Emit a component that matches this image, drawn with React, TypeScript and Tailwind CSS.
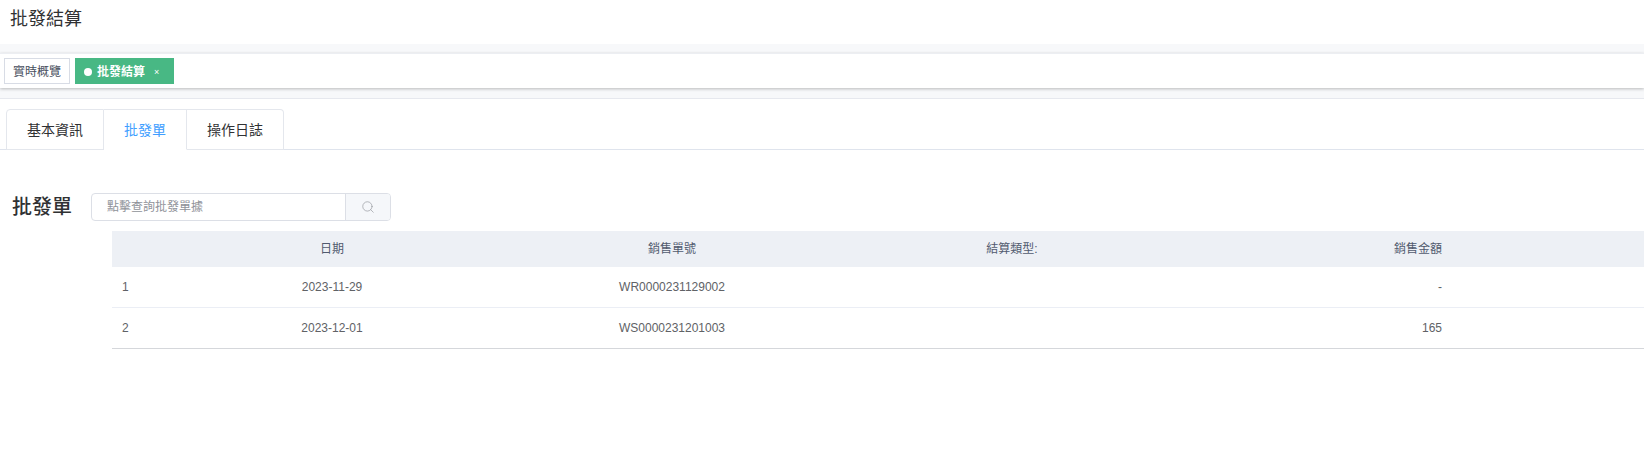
import { Search } from 'lucide-react';

const rows = [
  { id: 1, date: '2023-11-29', no: 'WR0000231129002', type: '', amount: '-' },
  { id: 2, date: '2023-12-01', no: 'WS0000231201003', type: '', amount: '165' },
];

function App() {
  return (
    <div className="h-[453px] overflow-hidden bg-white font-['Liberation_Sans','Noto_Sans_CJK_TC',sans-serif] text-[#515a6e]">
      {/* Page title */}
      <div className="h-11 pl-[10px] pt-[7px] text-[18px] leading-6 text-[#303133]">批發結算</div>

      {/* Tag bar */}
      <div className="h-[55px] border-b border-[#e6e8ee] bg-[#f7f8fa] pt-[9px]">
        <div className="flex h-[35px] items-center gap-[5px] border-t border-[#eceef2] bg-white pl-1 shadow-[0_1px_3px_rgba(0,0,0,0.25)]">
          <div className="flex h-[26px] w-[66px] items-center justify-center border border-[#d8dce5] pt-px text-xs text-[#495060]">實時概覽</div>
          <div className="flex h-[26px] w-[99px] items-center bg-[#48b884] pl-[9px] pt-px text-xs font-bold text-white">
            <span className="mr-[5px] h-2 w-2 rounded-full bg-white" />
            批發結算
            <span className="ml-[9px] text-[9px] font-normal">×</span>
          </div>
        </div>
      </div>

      {/* Tabs */}
      <div className="mt-[10px] flex h-[41px] border-b border-[#dfe4ed] pl-[6px] text-sm text-[#303133]">
        <div className="flex h-[41px] w-[98px] items-center justify-center rounded-tl border border-[#e4e7ed]">基本資訊</div>
        <div className="flex h-[41px] w-[83px] items-center justify-center border-y border-r border-[#e4e7ed] border-b-white text-[#409eff]">批發單</div>
        <div className="flex h-[41px] w-[97px] items-center justify-center rounded-tr border-y border-r border-[#e4e7ed]">操作日誌</div>
      </div>

      {/* Section header + search */}
      <div className="mt-[43px] flex h-[28px] items-center pl-[12px]">
        <h2 className="w-[79px] text-[20px] font-medium leading-7 text-[#303133]">批發單</h2>
        <div className="flex h-[28px] w-[300px] overflow-hidden rounded border border-[#dcdfe6]">
          <div className="flex flex-1 items-center pl-[15px] text-xs text-[#8f9299]">點擊查詢批發單據</div>
          <div className="flex w-[45px] items-center justify-center border-l border-[#dcdfe6] bg-[#f5f7fa] text-[#909399]">
            <Search size={14} strokeWidth={1.1} className="-mt-px" />
          </div>
        </div>
      </div>

      {/* Table */}
      <div className="ml-[112px] mt-[10px]">
        <table className="w-full table-fixed border-collapse text-xs text-[#606266]">
          <colgroup>
            <col className="w-[50px]" />
            <col className="w-[340px]" />
            <col className="w-[340px]" />
            <col className="w-[340px]" />
            <col className="w-[270px]" />
            <col />
          </colgroup>
          <thead>
            <tr className="h-9 bg-[#edf0f5] text-[#515a6e]">
              <th />
              <th className="font-normal">日期</th>
              <th className="font-normal">銷售單號</th>
              <th className="font-normal">結算類型:</th>
              <th className="pr-[10px] text-right font-normal">銷售金額</th>
              <th />
            </tr>
          </thead>
          <tbody>
            {rows.map((row, i) => (
              <tr key={row.id} className={i === rows.length - 1 ? 'h-[41px] border-b border-[#d5d7db]' : 'h-[40px] border-b border-[#ebeef5]'}>
                <td className="pl-[10px]">{row.id}</td>
                <td className="text-center">{row.date}</td>
                <td className="text-center">{row.no}</td>
                <td className="text-center">{row.type}</td>
                <td className="pr-[10px] text-right">{row.amount}</td>
                <td />
              </tr>
            ))}
          </tbody>
        </table>
      </div>
    </div>
  );
}

export default App;
